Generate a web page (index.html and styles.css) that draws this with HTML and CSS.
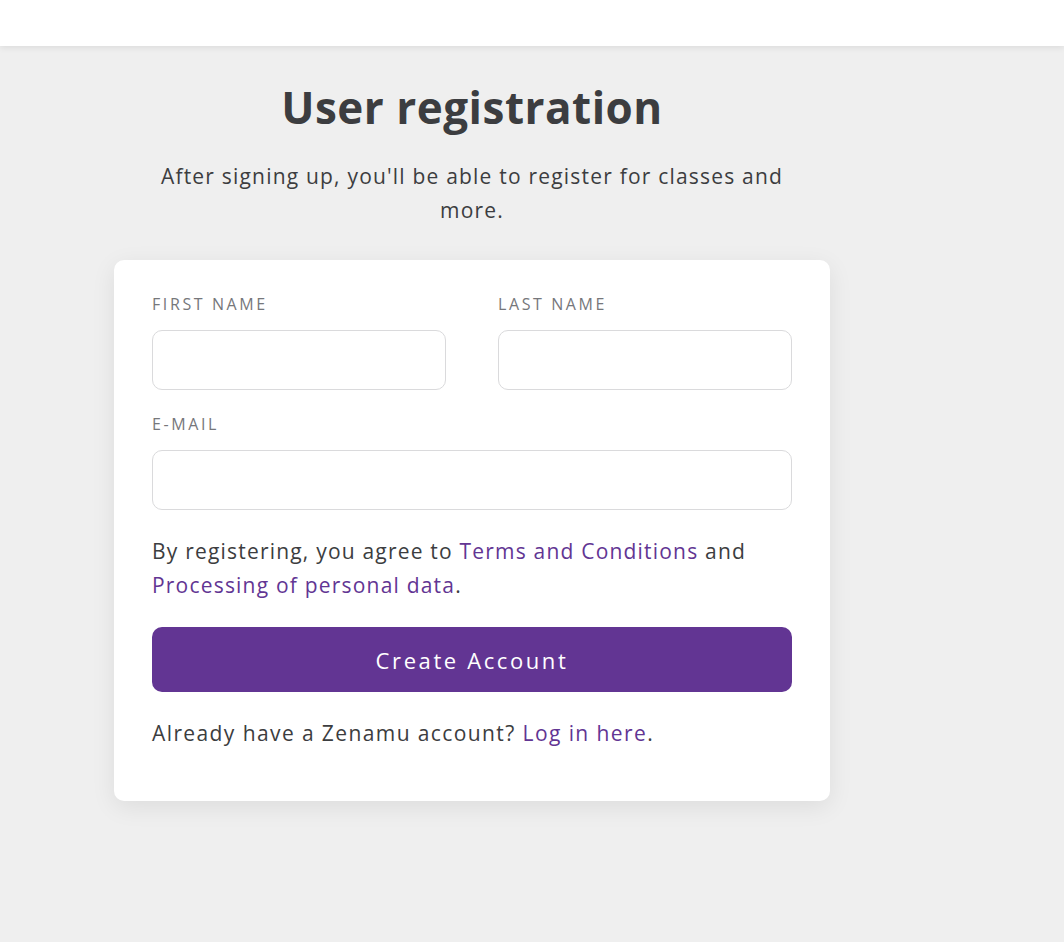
FILE: index.html
```html
<!DOCTYPE html>
<html lang="en">
<head>
<meta charset="utf-8">
<title>User registration</title>
<link rel="stylesheet" href="styles.css">
</head>
<body>
<header class="topbar"></header>
<main class="page">
  <section class="register">
    <h1 class="title">User registration</h1>
    <p class="subtitle">After signing up, you'll be able to register for classes and more.</p>
    <form class="card">
      <div class="row">
        <label class="field">
          <span class="label">First name</span>
          <input class="input" type="text">
        </label>
        <label class="field">
          <span class="label">Last name</span>
          <input class="input" type="text">
        </label>
      </div>
      <label class="field">
        <span class="label">E-mail</span>
        <input class="input" type="email">
      </label>
      <p class="text terms">By registering, you agree to <a href="#">Terms and Conditions</a> and <a href="#">Processing of personal data</a>.</p>
      <button class="btn" type="button">Create Account</button>
      <p class="text login">Already have a Zenamu account? <a href="#">Log in here</a>.</p>
    </form>
  </section>
</main>
</body>
</html>
```
FILE: styles.css
```css
* { box-sizing: border-box; }
html, body { margin: 0; padding: 0; }
body {
  background: #efefef;
  font-family: "Open Sans", "Noto Sans", sans-serif;
  color: #3c3d40;
  min-height: 942px;
}
.topbar {
  height: 46px;
  background: #fff;
  box-shadow: 0 2px 6px rgba(0,0,0,0.08);
  position: relative;
}
.page {
  padding: 0 0 0 114px;
}
.register {
  width: 716px;
  display: flex;
  flex-direction: column;
  align-items: center;
}
.title {
  margin: 33px 0 0;
  font-size: 44px;
  line-height: 56px;
  font-weight: 700;
  color: #3c3d40;
  letter-spacing: 0.5px;
}
.subtitle {
  margin: 24px 0 0;
  width: 660px;
  text-align: center;
  font-size: 21px;
  line-height: 34px;
  letter-spacing: 1.2px;
  color: #3c3d40;
}
.card {
  margin-top: 33px;
  width: 716px;
  background: #fff;
  border-radius: 10px;
  box-shadow: 0 6px 24px rgba(0,0,0,0.08);
  padding: 33px 38px 51px;
  display: flex;
  flex-direction: column;
}
.row {
  display: grid;
  grid-template-columns: 1fr 1fr;
  column-gap: 52px;
}
.field {
  display: flex;
  flex-direction: column;
  margin-bottom: 23px;
}
.label {
  font-size: 16px;
  line-height: 22px;
  text-transform: uppercase;
  letter-spacing: 2.6px;
  color: #76777b;
  margin-bottom: 15px;
}
.input {
  height: 60px;
  border: 1px solid #dadadc;
  border-radius: 10px;
  background: #fff;
  font: inherit;
  padding: 0 16px;
  outline: none;
}
.text {
  margin: 0;
  font-size: 21px;
  line-height: 34px;
  letter-spacing: 1.2px;
  color: #3c3d40;
}
.terms { margin-top: 1px; }
.login { margin-top: 24px; letter-spacing: 1.4px; }
.text a { color: #623593; text-decoration: none; }
.btn {
  margin-top: 25px;
  height: 65px;
  border: 0;
  border-radius: 10px;
  background: #623593;
  color: #fff;
  font-family: inherit;
  font-size: 22px;
  letter-spacing: 2.6px;
  cursor: pointer;
}
```
